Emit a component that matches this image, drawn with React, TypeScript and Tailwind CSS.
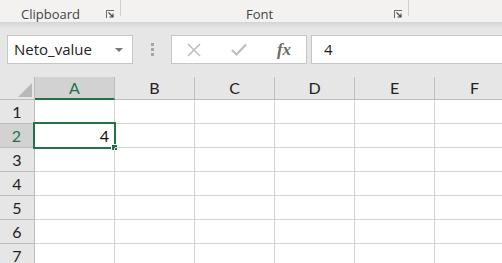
import React from "react";

const cols = ["A", "B", "C", "D", "E", "F"];
const rows = [1, 2, 3, 4, 5, 6, 7];

function Launcher() {
  return (
    <svg width="9" height="9" viewBox="0 0 9 9" className="shrink-0">
      <path d="M0.5 8V0.5H8" fill="none" stroke="#6b6b6b" strokeWidth="1" />
      <path d="M2.5 2.5L7 7M7 3.5V7H3.5" fill="none" stroke="#444" strokeWidth="1.1" />
    </svg>
  );
}

export default function App() {
  return (
    <div
      className="w-[502px] h-[263px] overflow-hidden bg-[#e6e6e6] flex flex-col"
      style={{ fontFamily: "'Open Sans', 'Noto Sans', sans-serif" }}
    >
      {/* Ribbon group labels */}
      <div className="h-[22px] bg-[#f3f2f1] flex shrink-0">
        <div className="w-[120px] flex items-center pl-[21px] pr-[4px] pt-[6px]">
          <span className="text-[13px] text-[#444] flex-1 leading-none">Clipboard</span>
          <span className="mr-[1px]"><Launcher /></span>
        </div>
        <div className="w-px h-[16px] bg-[#d1d1d1]" />
        <div className="w-[287px] flex items-center pt-[6px]">
          <span className="flex-1 text-center text-[13px] text-[#444] leading-none pl-[4px]">Font</span>
          <span className="mr-[5px]"><Launcher /></span>
        </div>
        <div className="w-px h-[16px] bg-[#d1d1d1]" />
      </div>
      <div className="h-[6px] shrink-0 bg-gradient-to-b from-[#d4d4d4] to-[#e6e6e6]" />

      {/* Formula bar */}
      <div className="h-[49px] shrink-0 flex items-start pt-[7px]">
        <div className="ml-[7px] w-[126px] h-[29px] bg-white border border-[#c6c6c6] flex items-center pl-[6px] pr-[9px]">
          <span className="flex-1 text-[15px] text-[#222] leading-none">Neto_value</span>
          <svg width="8" height="4" viewBox="0 0 8 4">
            <path d="M0 0H8L4 4Z" fill="#777" />
          </svg>
        </div>
        <div className="w-[38px] h-[29px] flex flex-col items-center justify-center gap-[2px]">
          <div className="w-[3px] h-[3px] bg-[#a6a6a6]" />
          <div className="w-[3px] h-[3px] bg-[#a6a6a6]" />
          <div className="w-[3px] h-[3px] bg-[#a6a6a6]" />
        </div>
        <div className="w-[136px] h-[29px] bg-white border border-[#c6c6c6] flex items-center">
          <div className="w-[44px] flex justify-center">
            <svg width="14" height="14" viewBox="0 0 14 14">
              <path d="M1 1L13 13M13 1L1 13" stroke="#bdbdbd" strokeWidth="1.6" />
            </svg>
          </div>
          <div className="w-[46px] flex justify-center">
            <svg width="16" height="13" viewBox="0 0 16 13">
              <path d="M1 7L5.5 11.5L15 1.5" fill="none" stroke="#bdbdbd" strokeWidth="2.2" />
            </svg>
          </div>
          <div className="w-[44px] flex justify-center">
            <span
              className="text-[17px] leading-none text-[#6a6a6a] italic font-semibold"
              style={{ fontFamily: "'Liberation Serif', 'DejaVu Serif', serif" }}
            >
              fx
            </span>
          </div>
        </div>
        <div className="ml-[4px] flex-1 h-[29px] bg-white border border-[#c6c6c6] border-r-0 flex items-center pl-[12px]">
          <span className="text-[15px] text-[#222] leading-none">4</span>
        </div>
      </div>

      {/* Grid */}
      <div
        className="flex flex-col bg-white"
        style={{ fontFamily: "'Lato', 'Open Sans', sans-serif" }}
      >
        <div className="flex h-[23px] shrink-0 bg-[#e6e6e6]">
          <div className="w-[35px] shrink-0 relative border-r border-b border-[#bdbdbd]">
            <svg width="14" height="14" viewBox="0 0 14 14" className="absolute right-[2px] bottom-[2px]">
              <path d="M14 0V14H0Z" fill="#b8b8b8" />
            </svg>
          </div>
          {cols.map((c, i) => (
            <div
              key={c}
              className={
                i === 0
                  ? "w-[80px] shrink-0 flex items-center justify-center text-[16px] text-[#217346] bg-[#d2d2d2] border-r border-[#bdbdbd] border-b-2 border-b-[#217346]"
                  : "w-[80px] shrink-0 flex items-center justify-center text-[16px] text-[#222] border-r border-b border-[#bdbdbd]"
              }
            >
              {c}
            </div>
          ))}
        </div>
        {rows.map((r) => (
          <div key={r} className="flex h-[24px] shrink-0">
            <div
              className={
                r === 2
                  ? "w-[35px] shrink-0 bg-[#d2d2d2] text-[#217346] border-r-2 border-r-[#217346] border-b border-b-[#bdbdbd] flex items-center justify-center text-[16px]"
                  : "w-[35px] shrink-0 bg-[#e6e6e6] text-[#222] border-r border-b border-[#bdbdbd] flex items-center justify-center text-[16px]"
              }
            >
              {r}
            </div>
            {cols.map((c, i) => (
              <div
                key={c}
                className="w-[80px] shrink-0 border-r border-b border-[#d4d4d4] relative flex items-center justify-end pr-[3px] text-[16px] text-[#111]"
              >
                {r === 2 && i === 0 && (
                  <>
                    <span className="pr-[2px]">4</span>
                    <div className="absolute -left-[2px] -top-[2px] w-[83px] h-[27px] border-2 border-[#217346]" />
                    <div className="absolute -right-[4px] -bottom-[4px] w-[7px] h-[7px] bg-[#217346] border border-white" />
                  </>
                )}
              </div>
            ))}
          </div>
        ))}
      </div>
    </div>
  );
}
